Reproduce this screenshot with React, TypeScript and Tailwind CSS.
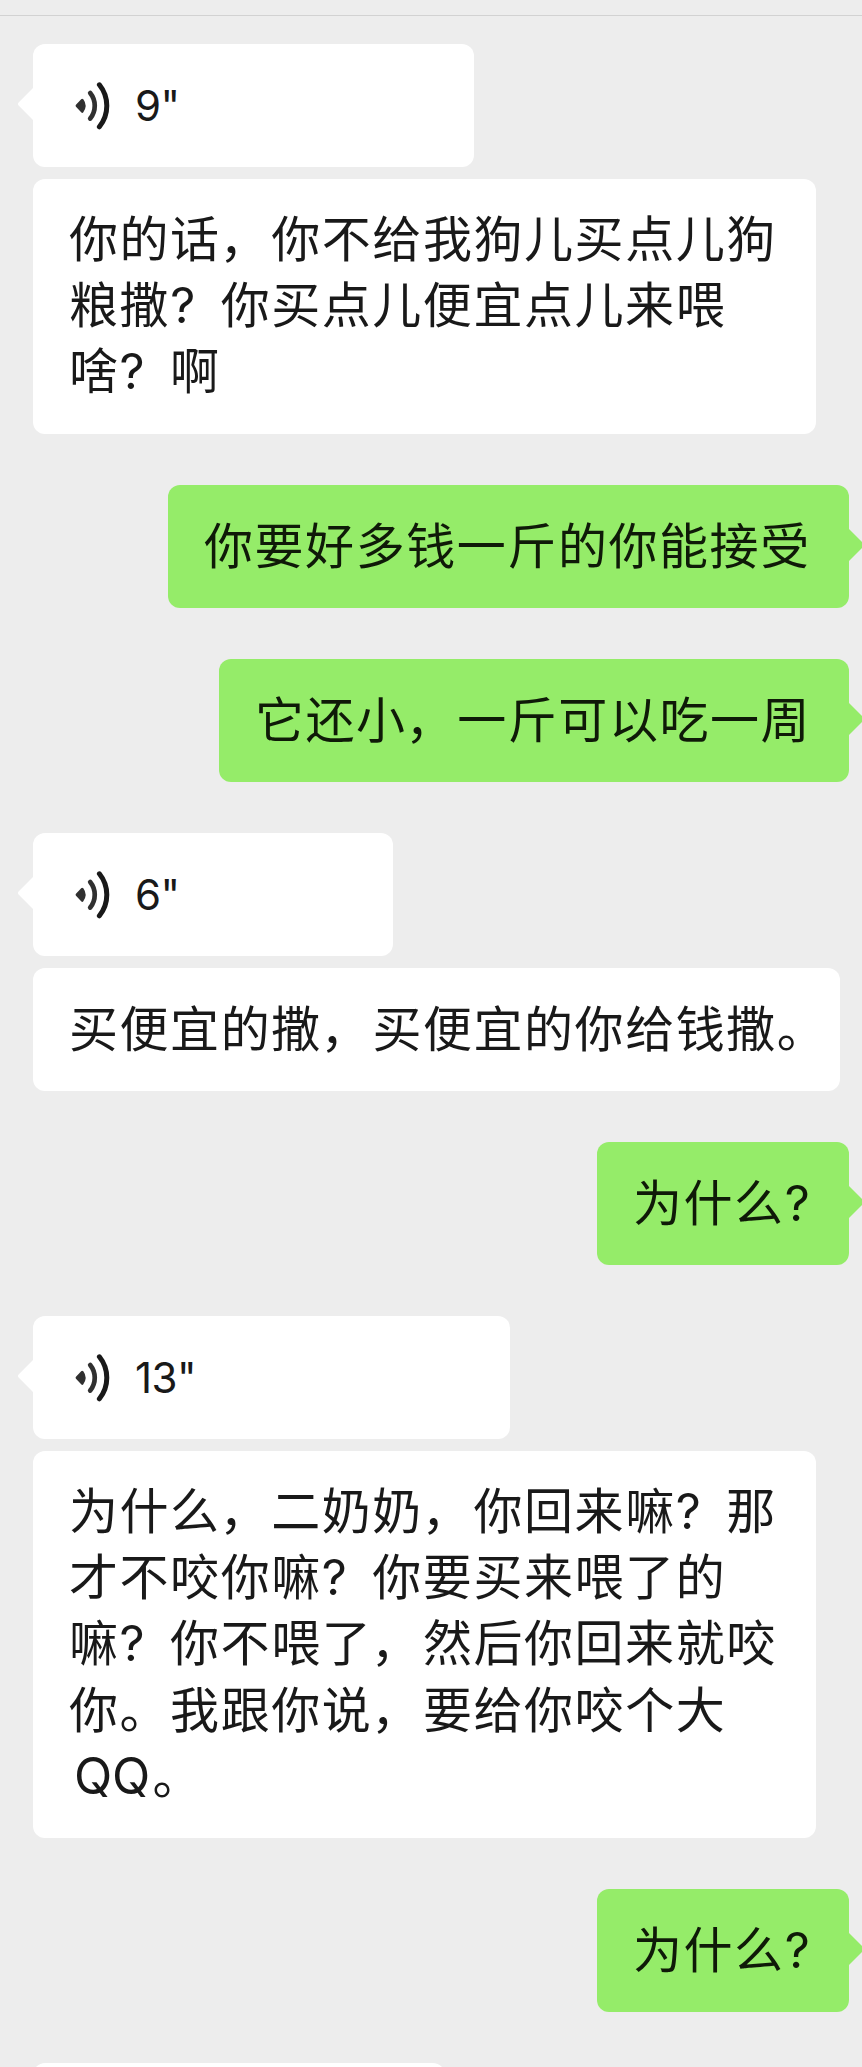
import { clsx } from 'clsx';

type Message = {
  id: number;
  type: 'voice' | 'transcript' | 'sent';
  size: string;
  seconds?: number;
  lines?: string[];
};

// === CHAT DATA ===
const MESSAGES: Message[] = [
  { id: 1, type: 'voice', size: 'w-[441px] h-[123px]', seconds: 9 },
  {
    id: 2,
    type: 'transcript',
    size: 'w-[783px] h-[255px]',
    lines: ['你的话，你不给我狗儿买点儿狗', '粮撒？你买点儿便宜点儿来喂', '啥？啊'],
  },
  { id: 3, type: 'sent', size: 'w-[681px] h-[123px]', lines: ['你要好多钱一斤的你能接受'] },
  { id: 4, type: 'sent', size: 'w-[630px] h-[123px]', lines: ['它还小，一斤可以吃一周'] },
  { id: 5, type: 'voice', size: 'w-[360px] h-[123px]', seconds: 6 },
  { id: 6, type: 'transcript', size: 'w-[807px] h-[123px]', lines: ['买便宜的撒，买便宜的你给钱撒。'] },
  { id: 7, type: 'sent', size: 'w-[252px] h-[123px]', lines: ['为什么？'] },
  { id: 8, type: 'voice', size: 'w-[477px] h-[123px]', seconds: 13 },
  {
    id: 9,
    type: 'transcript',
    size: 'w-[783px] h-[387px]',
    lines: [
      '为什么，二奶奶，你回来嘛？那',
      '才不咬你嘛？你要买来喂了的',
      '嘛？你不喂了，然后你回来就咬',
      '你。我跟你说，要给你咬个大',
      'QQ。',
    ],
  },
  { id: 10, type: 'sent', size: 'w-[252px] h-[123px]', lines: ['为什么？'] },
  { id: 11, type: 'voice', size: 'w-[412px] h-[123px]' },
];

const VoiceIcon = () => (
  <svg width="36" height="48" viewBox="0 0 36 48" fill="none" strokeLinecap="round">
    <path
      d="M2 23.8 L7.2 18.2 A9.5 9.5 0 0 1 7.2 29.4 Z"
      fill="#303030"
      stroke="#303030"
      strokeWidth="2.8"
      strokeLinejoin="round"
    />
    <path d="M15.2 11 A20.3 20.3 0 0 1 15.2 36.6" stroke="#303030" strokeWidth="4.7" />
    <path d="M24.4 2.8 A33.5 33.5 0 0 1 24.4 44.8" stroke="#191919" strokeWidth="5" />
  </svg>
);

const Tail = ({ sent }: { sent: boolean }) => (
  <svg
    className={clsx('absolute top-[43px]', sent ? 'left-full -scale-x-100' : 'right-full')}
    width="16"
    height="34"
    viewBox="0 0 16 34"
  >
    <path
      d="M16 1 L1.6 15.4 Q0 17 1.6 18.6 L16 33 Z"
      fill={sent ? '#95ec69' : '#ffffff'}
    />
  </svg>
);

// Latin letters and some punctuation sit in their own cells
const Line = ({ text }: { text: string }) => (
  <p className="h-[66.2px] whitespace-nowrap">
    {text.split(/(？|，|QQ)/).map((part, i) => {
      if (part === '？') {
        return (
          <span key={i} className="mr-[22.5px] inline-block w-[28px] text-[49px] leading-none tracking-normal">
            ?
          </span>
        );
      }
      if (part === '，') {
        return (
          <span key={i} className="relative -left-[1.5px]">
            ，
          </span>
        );
      }
      if (part === 'QQ') {
        return (
          <span key={i} className="ml-[5px] mr-[2.5px] text-[50px] leading-none tracking-[-0.3px]">
            QQ
          </span>
        );
      }
      return part;
    })}
  </p>
);

const Bubble = ({ message }: { message: Message }) => {
  const sent = message.type === 'sent';

  return (
    <div
      className={clsx(
        'relative shrink-0 rounded-[12px]',
        message.size,
        sent ? 'self-end mr-[13px] bg-[#95ec69] text-[#0f1a08]' : 'ml-[33px] bg-white text-[#191919]',
        message.type === 'transcript' ? 'mt-[12px]' : 'mt-[51px] first:mt-[28px]'
      )}
    >
      {message.type !== 'transcript' && <Tail sent={sent} />}

      {message.type === 'voice' ? (
        <div className="flex h-full items-center gap-[24px] pl-[42px]">
          <VoiceIcon />
          {message.seconds && (
            <span className="text-[42px] leading-none tracking-[-0.5px]">{message.seconds}"</span>
          )}
        </div>
      ) : (
        <div
          className={clsx(
            'pl-[36px] text-[49px] leading-[66.2px] tracking-[1.56px]',
            message.lines?.length === 1 ? 'pt-[29px]' : 'pt-[28px]'
          )}
        >
          {message.lines?.map((line) => (
            <Line key={line} text={line} />
          ))}
        </div>
      )}
    </div>
  );
};

export default function App() {
  return (
    <div
      lang="zh-CN"
      className="flex h-[2067px] w-[862px] flex-col overflow-hidden bg-[#ededed] font-['Inter','Noto_Sans_CJK_SC',sans-serif]"
    >
      <div className="h-[16px] shrink-0 border-b border-[#d2d2d2]" />
      <main className="flex flex-col items-start">
        {MESSAGES.map((message) => (
          <Bubble key={message.id} message={message} />
        ))}
      </main>
    </div>
  );
}
